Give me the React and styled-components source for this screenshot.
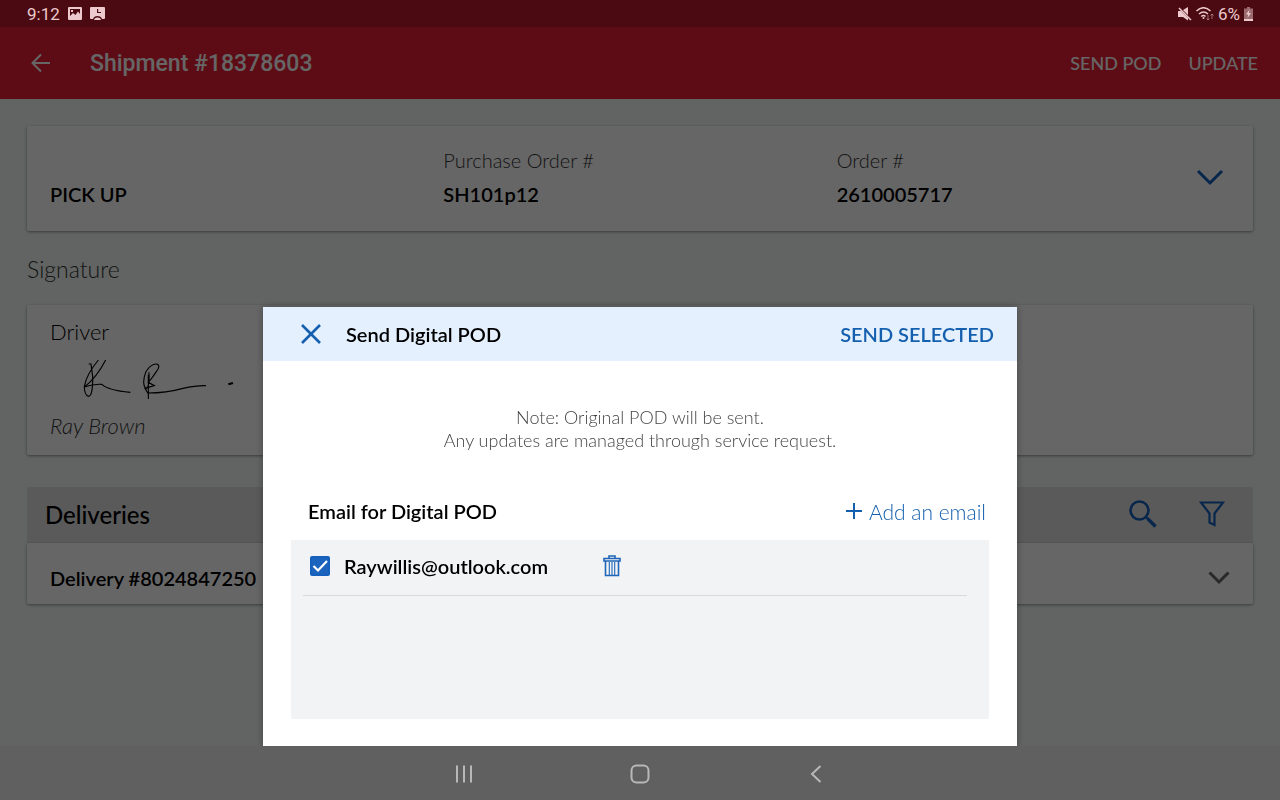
import React, { useState } from 'react'
import styled, { createGlobalStyle } from "styled-components";

export default function App() {

    const [checked, setChecked] = useState(true);

  return (
    <Screen>
      <GlobalStyle />
      <StatusBar>
        <StatusGroup>
          <span>9:12</span>
          <ImageIcon />
          <ContactIcon />
        </StatusGroup>
        <StatusGroup $tight>
          <MuteIcon />
          <WifiIcon />
          <span>6%</span>
          <BatteryIcon />
        </StatusGroup>
      </StatusBar>

      <AppBar>
        <IconButton aria-label="Back">
          <svg width="20" height="20" viewBox="0 0 20 20" fill="none" stroke="currentColor" strokeWidth="2">
            <path d="M19 10H2M10 1.5L1.5 10L10 18.5" />
          </svg>
        </IconButton>
        <Title>Shipment #18378603</Title>
        <BarButton>SEND POD</BarButton>
        <BarButton>UPDATE</BarButton>
      </AppBar>

      <Main>
        <OrderCard>
          <Field>
            <Value>PICK UP</Value>
          </Field>
          <Field>
            <Label>Purchase Order #</Label>
            <Value>SH101p12</Value>
          </Field>
          <LastField>
            <Field>
              <Label>Order #</Label>
              <Value>2610005717</Value>
            </Field>
            <IconButton $color="#1560bd" aria-label="Show order details">
              <svg width="28" height="18" viewBox="0 0 28 18" fill="none" stroke="currentColor" strokeWidth="3">
                <path d="M2 3L14 15L26 3" />
              </svg>
            </IconButton>
          </LastField>
        </OrderCard>

        <SectionLabel>Signature</SectionLabel>
        <SignatureCard>
          <Driver>Driver</Driver>
          <Signature />
          <Signer>Ray Brown</Signer>
        </SignatureCard>

        <DeliveriesBar>
          <DeliveriesTitle>Deliveries</DeliveriesTitle>
          <IconButton $color="#1560bd" aria-label="Search">
            <svg width="28" height="28" viewBox="0 0 28 28" fill="none" stroke="currentColor">
              <circle cx="10.5" cy="10.5" r="9" strokeWidth="2.6" />
              <path d="M17 17L19 19" strokeWidth="2.4" />
              <path d="M18.5 18.5L26.5 26.5" strokeWidth="3.4" />
            </svg>
          </IconButton>
          <IconButton $color="#1560bd" aria-label="Filter">
            <svg width="26" height="26" viewBox="0 0 26 26" fill="none" stroke="currentColor" strokeWidth="2.2">
              <path d="M2 1.5H24L15.5 12.5V24L10.5 21.5V12.5Z" />
            </svg>
          </IconButton>
        </DeliveriesBar>
        <DeliveryCard>
          <Value>Delivery #8024847250</Value>
          <IconButton $color="#666" aria-label="Show delivery">
            <svg width="22" height="14" viewBox="0 0 22 14" fill="none" stroke="currentColor" strokeWidth="3">
              <path d="M1.5 1.5L11 11L20.5 1.5" />
            </svg>
          </IconButton>
        </DeliveryCard>
      </Main>

      <NavBar>
        <NavButton aria-label="Recent apps">
          <svg width="18" height="18" viewBox="0 0 18 18" stroke="currentColor" strokeWidth="2">
            <path d="M2 0.5V17.5M9 0.5V17.5M16 0.5V17.5" />
          </svg>
        </NavButton>
        <NavButton aria-label="Home">
          <svg width="20" height="20" viewBox="0 0 20 20" fill="none" stroke="currentColor" strokeWidth="2">
            <rect x="1.5" y="1.5" width="17" height="17" rx="5" />
          </svg>
        </NavButton>
        <NavButton aria-label="Back">
          <svg width="12" height="18" viewBox="0 0 12 18" fill="none" stroke="currentColor" strokeWidth="2">
            <path d="M10.5 1L2 9L10.5 17" />
          </svg>
        </NavButton>
      </NavBar>

      <Overlay>
        <Dialog role="dialog" aria-labelledby="pod-title">
          <DialogHeader>
            <IconButton $color="#1560ae" aria-label="Close">
              <svg width="20" height="20" viewBox="0 0 20 20" stroke="currentColor" strokeWidth="2.6">
                <path d="M1 1L19 19M19 1L1 19" />
              </svg>
            </IconButton>
            <DialogTitle id="pod-title">Send Digital POD</DialogTitle>
            <SendButton>SEND SELECTED</SendButton>
          </DialogHeader>
          <Note>
            Note: Original POD will be sent.<br />
            Any updates are managed through service request.
          </Note>
          <EmailHeader>
            <EmailTitle>Email for Digital POD</EmailTitle>
            <AddButton>
              <svg width="16" height="16" viewBox="0 0 16 16" stroke="currentColor" strokeWidth="2">
                <path d="M8 0V16M0 8H16" />
              </svg>
              Add an email
            </AddButton>
          </EmailHeader>
          <EmailList>
            <EmailRow>
              <EmailLabel>
                <CheckWrap>
                  <Checkbox
                    type="checkbox"
                    checked={checked}
                    onChange={(e) => setChecked(e.target.checked)}
                  />
                  {checked && (
                    <svg width="20" height="20" viewBox="0 0 20 20" fill="none" stroke="#fff" strokeWidth="2.2">
                      <path d="M3.5 10L8 14.5L17 5" />
                    </svg>
                  )}
                </CheckWrap>
                Raywillis@outlook.com
              </EmailLabel>
              <IconButton $color="#1f66b8" aria-label="Delete email">
                <TrashIcon />
              </IconButton>
            </EmailRow>
          </EmailList>
        </Dialog>
      </Overlay>
    </Screen>
  )
}

const ImageIcon = () => (
  <svg width="14" height="13" viewBox="0 0 14 13" fill="currentColor">
    <path fillRule="evenodd" d="M1 0H13Q14 0 14 1V12Q14 13 13 13H1Q0 13 0 12V1Q0 0 1 0ZM2 2V9L5 6L7.5 8L10 4.5L12 7V2ZM3 3H5V5H3Z" />
  </svg>
)

const ContactIcon = () => (
  <svg width="15" height="13" viewBox="0 0 15 13" fill="currentColor">
    <path fillRule="evenodd" d="M1 0H14Q15 0 15 1V11Q15 12 14 12H12Q11 9 7.5 9Q4 9 3 12H1Q0 12 0 11V1Q0 0 1 0ZM7 2V6H11V5H8.2V2Z" />
    <path d="M4 13Q4.5 10.5 7.5 10.5Q10.5 10.5 11 13Z" />
  </svg>
)

const MuteIcon = () => (
  <svg width="14" height="14" viewBox="0 0 14 14" fill="currentColor">
    <path d="M0 4H3L10 11V13.5L5 10H0ZM5 3L10 0V8Z" />
    <path d="M1 1L13 13" stroke="currentColor" strokeWidth="1.5" />
  </svg>
)

const WifiIcon = () => (
  <svg width="18" height="14" viewBox="0 0 18 14" fill="none" stroke="currentColor" strokeWidth="1.5">
    <path d="M0.5 4Q7.5 -2.5 14.5 4M3 7Q7.5 3 12 7M5.2 9.5Q7.5 7.5 9.5 9.5" />
    <circle cx="7.5" cy="11" r="1" fill="currentColor" stroke="none" />
    <path d="M12 8V13M10.5 11.5L12 13L13.5 11.5M16 12V7M14.5 8.5L16 7L17.5 8.5" strokeWidth="1" opacity="0.5" />
  </svg>
)

const BatteryIcon = () => (
  <svg width="9" height="14" viewBox="0 0 9 14" fill="currentColor">
    <path d="M3 0H6V1.5H9V14H0V1.5H3Z" opacity="0.5" />
    <path d="M0 12H9V14H0ZM5.5 2.5L2 7.5H4.2L3.5 11L7 6H4.8Z" />
  </svg>
)

const Signature = () => (
  <svg width="154" height="44" viewBox="190 322 462 132" fill="none" stroke="#000" strokeWidth="3.4">
    <path d="M207 343H214L219 380Q220 440 206 440Q194 436 194 410Q200 375 236 331" />
    <path d="M258 331Q230 385 194 412Q222 402 247 404Q265 422 332 428" />
    <path d="M386 448V375M388 368Q390 415 378 418Q366 400 378 368Q392 342 412 343Q424 348 410 366Q400 382 386 398L404 408L376 416L384 430Q440 430 490 416Q530 407 559 408" />
    <path d="M626 404L640 400" strokeWidth="6" />
  </svg>
)

const TrashIcon = () => (
  <svg width="18" height="22" viewBox="0 0 18 22" fill="none" stroke="currentColor" strokeWidth="1.6">
    <path d="M6 3V1H12V3M1 3.5H17V6H1ZM2.5 6V20.5H15.5V6" />
    <path d="M6.3 7V20M11.7 7V20M9 7V20" strokeWidth="1.1" />
  </svg>
)

const GlobalStyle = createGlobalStyle`
  * {
    box-sizing: border-box;
  }

  body {
    margin: 0;
    font-family: Lato, "Noto Sans", sans-serif;
  }

  button {
    font-family: inherit;
    border: none;
    background: none;
    padding: 0;
    cursor: pointer;
  }

  svg {
    display: block;
  }
`

const Screen = styled.div`
  min-height: 100vh;
  display: flex;
  flex-direction: column;
  background-color: #f2f9f5;
`

const StatusBar = styled.header`
  height: 27px;
  padding: 0 27px;
  display: flex;
  justify-content: space-between;
  align-items: center;
  background-color: #4b0a12;
  color: #ecc9cc;
  font-family: Roboto, sans-serif;
  font-size: 17px;
  position: relative;
  z-index: 2;
`

const StatusGroup = styled.div`
  display: flex;
  align-items: center;
  gap: ${(props) => (props.$tight ? "4px" : "8px")};
`

const AppBar = styled.div`
  height: 72px;
  padding: 0 22px 0 31px;
  display: flex;
  align-items: center;
  gap: 27px;
  background-color: #e91e36;
  color: #fff;
`

const IconButton = styled.button`
  display: flex;
  color: ${(props) => props.$color || "inherit"};
`

const Title = styled.h1`
  flex: 1;
  margin: 0 0 0 12px;
  font-family: Roboto, sans-serif;
  font-size: 23px;
  font-weight: 500;
`

const BarButton = styled.button`
  color: #fff;
  font-size: 18px;
  font-weight: 500;
`

const Main = styled.main`
  flex: 1;
  padding: 27px 27px 0;
`

const Card = styled.section`
  background-color: #fff;
  border-radius: 2px;
  box-shadow: 0 1px 3px rgba(0, 0, 0, 0.4);
`

const OrderCard = styled(Card)`
  padding: 17px 23px 20px;
  display: grid;
  grid-template-columns: repeat(3, 1fr);
`

const Field = styled.div`
  display: flex;
  flex-direction: column;
  justify-content: flex-end;
`

const LastField = styled.div`
  display: flex;
  justify-content: space-between;
  align-items: center;
  padding-right: 6px;
`

const Label = styled.span`
  font-size: 20px;
  font-weight: 300;
  line-height: 34px;
  color: #333;
`

const Value = styled.span`
  font-size: 20px;
  font-weight: 600;
  line-height: 34px;
  color: #000;
`

const SectionLabel = styled.h2`
  margin: 23px 0 21px;
  font-size: 23px;
  font-weight: 300;
  line-height: 30px;
  color: #333;
`

const SignatureCard = styled(Card)`
  padding: 13px 23px;

  svg {
    margin: 11px 0 9px 33px;
  }
`

const Driver = styled.div`
  font-size: 22px;
  font-weight: 300;
  line-height: 28px;
`

const Signer = styled.div`
  font-size: 22px;
  font-style: italic;
  font-weight: 300;
  line-height: 32px;
  color: #333;
`

const DeliveriesBar = styled.div`
  height: 56px;
  margin-top: 32px;
  padding: 0 28px 2px 18px;
  display: flex;
  align-items: center;
  gap: 42px;
  background-color: #e1e1e1;
`

const DeliveriesTitle = styled.h2`
  flex: 1;
  margin: 0;
  font-size: 24px;
  font-weight: 500;
`

const DeliveryCard = styled(Card)`
  padding: 18px 23px 9px;
  display: flex;
  align-items: center;
  justify-content: space-between;
`

const NavBar = styled.nav`
  height: 54px;
  padding-top: 2px;
  display: flex;
  justify-content: center;
  align-items: center;
  background-color: #606060;
  position: relative;
  z-index: 2;
`

const NavButton = styled.button`
  width: 176px;
  display: flex;
  justify-content: center;
  color: #b8b8b8;
`

const Overlay = styled.div`
  position: fixed;
  inset: 0;
  z-index: 1;
  padding-bottom: 54px;
  display: flex;
  justify-content: center;
  align-items: flex-end;
  background-color: rgba(0, 0, 0, 0.6);
`

const Dialog = styled.div`
  width: 100%;
  max-width: 754px;
  padding-bottom: 27px;
  background-color: #fff;
  box-shadow: 0 0 8px rgba(0, 0, 0, 0.3);
`

const DialogHeader = styled.div`
  height: 54px;
  padding: 0 23px 0 38px;
  display: flex;
  align-items: center;
  gap: 25px;
  background-color: #e4f0fe;
`

const DialogTitle = styled.h2`
  flex: 1;
  margin: 0;
  font-size: 20px;
  font-weight: 600;
`

const SendButton = styled.button`
  font-size: 20px;
  font-weight: 600;
  color: #1560ae;
`

const Note = styled.p`
  margin: 45px 0 42px;
  text-align: center;
  font-size: 18px;
  font-weight: 300;
  line-height: 23px;
  color: #444;
`

const EmailHeader = styled.div`
  height: 34px;
  margin: 0 31px 12px 45px;
  display: flex;
  justify-content: space-between;
  align-items: center;
`

const EmailTitle = styled.h3`
  margin: 0;
  font-size: 20px;
  font-weight: 600;
`

const AddButton = styled.button`
  display: flex;
  align-items: center;
  gap: 7px;
  font-size: 21px;
  font-weight: 300;
  color: #1560ae;
`

const EmailList = styled.div`
  min-height: 179px;
  margin: 0 28px;
  padding: 0 22px 0 12px;
  background-color: #f2f3f5;
`

const EmailRow = styled.div`
  height: 56px;
  padding: 0 7px 3px;
  display: flex;
  align-items: center;
  border-bottom: 1px solid #d8dadc;
`

const EmailLabel = styled.label`
  min-width: 293px;
  display: flex;
  align-items: center;
  gap: 14px;
  font-size: 20px;
  font-weight: 600;
`

const CheckWrap = styled.span`
  display: grid;

  > * {
    grid-area: 1 / 1;
  }

  svg {
    pointer-events: none;
  }
`

const Checkbox = styled.input`
  appearance: none;
  width: 20px;
  height: 20px;
  margin: 0;
  border: 2px solid #1560bd;
  border-radius: 2px;

  &:checked {
    background-color: #1b64bd;
  }
`
